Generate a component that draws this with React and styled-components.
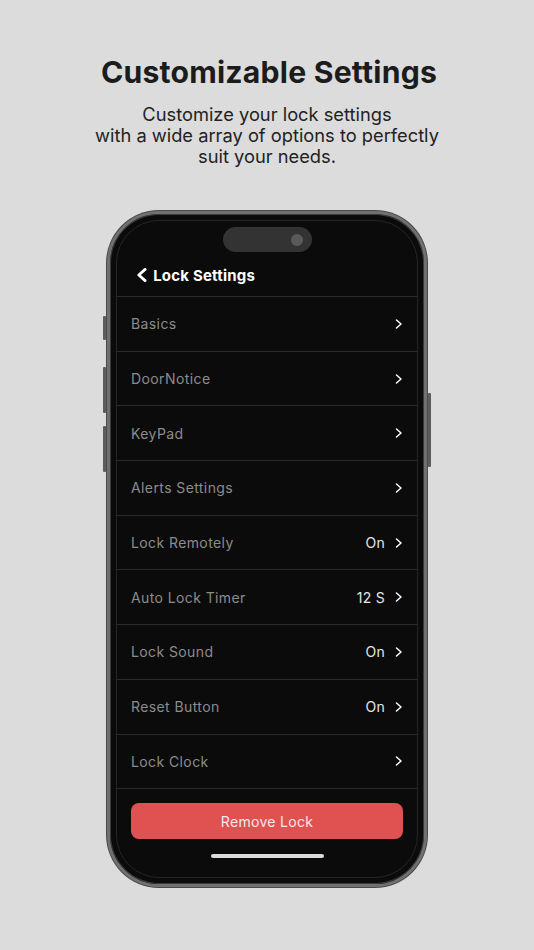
import React from 'react';
import styled, { createGlobalStyle } from 'styled-components';

const GlobalStyle = createGlobalStyle`
    html, body {
        margin: 0;
        padding: 0;
        background: #dcdcdc;
    }
    body {
        font-family: Inter, "Noto Sans", sans-serif;
    }
`;

const Page = styled.div`
    width: 534px;
    height: 950px;
    display: flex;
    flex-direction: column;
    align-items: center;
    padding-top: 53px;
    box-sizing: border-box;
    overflow: hidden;
`;

const Title = styled.h1`
    margin: 0 0 0 4px;
    font-size: 30.2px;
    line-height: 38px;
    font-weight: 700;
    color: #1c1c1c;
    letter-spacing: 0.2px;
`;

const Subtitle = styled.p`
    margin: 13px 0 0;
    font-size: 18.3px;
    line-height: 21px;
    color: #222;
    text-align: center;
`;

const Phone = styled.div`
    position: relative;
    margin-top: 44px;
    width: 320px;
    height: 676px;
    box-sizing: border-box;
    border: 3px solid #707070;
    box-shadow: 0 0 0 1px #4a4a4a, inset 0 0 0 1px #3a3a3a;
    border-radius: 52px;
    background: #0b0b0b;
    padding: 6px;
`;

const SideButton = styled.div`
    position: absolute;
    width: 3px;
    background: #5c5c5c;
    border-radius: 1px;
    top: ${(p) => p.top}px;
    height: ${(p) => p.h}px;
    ${(p) => (p.right ? 'right: -7px;' : 'left: -7px;')}
`;

const Screen = styled.div`
    height: 100%;
    box-sizing: border-box;
    border: 1px solid #262626;
    border-radius: 43px;
    background: #0b0b0b;
    display: flex;
    flex-direction: column;
    overflow: hidden;
`;

const Island = styled.div`
    align-self: center;
    margin-top: 6px;
    width: 89px;
    height: 25px;
    border-radius: 13px;
    background: #333;
    display: flex;
    align-items: center;
    justify-content: flex-end;
    padding-right: 9px;
    box-sizing: border-box;
`;

const Lens = styled.div`
    width: 12px;
    height: 12px;
    border-radius: 50%;
    background: #5a5a5a;
`;

const Header = styled.div`
    display: flex;
    align-items: center;
    gap: 6px;
    height: 42px;
    padding-left: 19px;
    margin-top: 2px;
    color: #fff;
    font-size: 15px;
    font-weight: 700;
    letter-spacing: 0.2px;
`;

const List = styled.div`
    display: flex;
    flex-direction: column;
    border-bottom: 1px solid #2a2a2a;
`;

const Row = styled.div`
    display: flex;
    align-items: center;
    height: 54.7px;
    box-sizing: border-box;
    border-top: 1px solid #2a2a2a;
    padding: 0 14px 0 14px;
`;

const Label = styled.span`
    flex: 1;
    font-size: 14px;
    color: #8c8c8c;
    letter-spacing: 0.4px;
`;

const Value = styled.span`
    font-size: 14px;
    color: #e6e6e6;
    letter-spacing: 0.3px;
    margin-right: 10px;
`;

const Footer = styled.div`
    flex: 1;
    display: flex;
    flex-direction: column;
    align-items: center;
    padding: 14px 14px 0;
`;

const RemoveButton = styled.button`
    width: 100%;
    height: 36px;
    border: none;
    border-radius: 8px;
    background: #e05252;
    color: #f6e8e8;
    font-family: Inter, "Noto Sans", sans-serif;
    font-size: 14px;
    letter-spacing: 0.3px;
`;

const HomeBar = styled.div`
    margin-top: 15px;
    width: 113px;
    height: 4px;
    border-radius: 2px;
    background: #dcdcdc;
`;

const Chevron = ({ left, size = 10, stroke = 1.5 }) => (
    <svg width={size * 0.8} height={size} viewBox="0 0 8 10" fill="none">
        <path
            d={left ? 'M6.5 1 L2 5 L6.5 9' : 'M1.5 1 L6 5 L1.5 9'}
            stroke="#fff"
            strokeWidth={stroke}
            strokeLinecap="round"
            strokeLinejoin="round"
        />
    </svg>
);

const settings = [
    { label: 'Basics' },
    { label: 'DoorNotice' },
    { label: 'KeyPad' },
    { label: 'Alerts Settings' },
    { label: 'Lock Remotely', value: 'On' },
    { label: 'Auto Lock Timer', value: '12 S' },
    { label: 'Lock Sound', value: 'On' },
    { label: 'Reset Button', value: 'On' },
    { label: 'Lock Clock' },
];

const App = () => (
    <>
        <GlobalStyle />
        <Page>
            <Title>Customizable Settings</Title>
            <Subtitle>
                Customize your lock settings
                <br />
                with a wide array of options to perfectly
                <br />
                suit your needs.
            </Subtitle>
            <Phone>
                <SideButton top={102} h={24} />
                <SideButton top={153} h={46} />
                <SideButton top={212} h={46} />
                <SideButton right top={179} h={74} />
                <Screen>
                    <Island>
                        <Lens />
                    </Island>
                    <Header>
                        <Chevron left size={14} stroke={2} />
                        Lock Settings
                    </Header>
                    <List>
                        {settings.map((s) => (
                            <Row key={s.label}>
                                <Label>{s.label}</Label>
                                {s.value && <Value>{s.value}</Value>}
                                <Chevron />
                            </Row>
                        ))}
                    </List>
                    <Footer>
                        <RemoveButton>Remove Lock</RemoveButton>
                        <HomeBar />
                    </Footer>
                </Screen>
            </Phone>
        </Page>
    </>
);

export default App;
